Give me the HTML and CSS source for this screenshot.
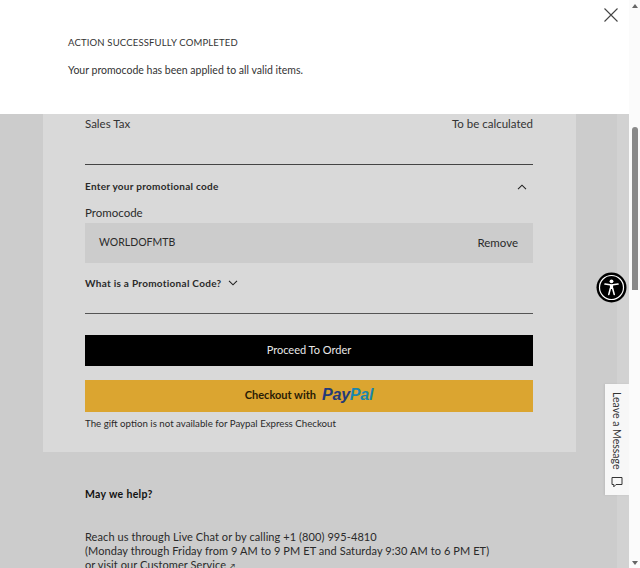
FILE: index.html
```html
<!DOCTYPE html>
<html lang="en">
<head>
<meta charset="utf-8">
<title>Cart</title>
<link rel="stylesheet" href="styles.css">
</head>
<body>
<div class="viewport">
  <main class="page">
    <section class="notice">
      <button class="close" aria-label="Close">
        <svg width="16" height="16" viewBox="0 0 16 16"><path d="M1.5 1.5L14.5 14.5M14.5 1.5L1.5 14.5" stroke="#444" stroke-width="1.1" fill="none"/></svg>
      </button>
      <h2 class="notice-title">ACTION SUCCESSFULLY COMPLETED</h2>
      <p class="notice-text">Your promocode has been applied to all valid items.</p>
    </section>
    <div class="backdrop">
      <div class="main-col">
        <section class="card">
          <div class="row tax"><span>Sales Tax</span><span>To be calculated</span></div>
          <div class="row promo-head">
            <span>Enter your promotional code</span>
            <svg class="chev-up" width="10" height="6" viewBox="0 0 10 6"><path d="M1 5.2L5 1.2L9 5.2" stroke="#222" stroke-width="1.1" fill="none"/></svg>
          </div>
          <div class="promo-label">Promocode</div>
          <div class="row promo-input"><span class="code">WORLDOFMTB</span><span>Remove</span></div>
          <div class="what">
            <span>What is a Promotional Code?</span>
            <svg width="10" height="6" viewBox="0 0 10 6"><path d="M1 .8L5 4.8L9 .8" stroke="#222" stroke-width="1.1" fill="none"/></svg>
          </div>
          <button class="order">Proceed To Order</button>
          <button class="paypal"><span>Checkout with</span><span class="pp-logo"><span class="pp-pay">Pay</span><span class="pp-pal">Pal</span></span></button>
          <p class="note">The gift option is not available for Paypal Express Checkout</p>
        </section>
        <section class="help">
          <h3 class="help-title">May we help?</h3>
          <p class="help-text">Reach us through Live Chat or by calling +1 (800) 995-4810<br>(Monday through Friday from 9 AM to 9 PM ET and Saturday 9:30 AM to 6 PM ET)<br>or visit our Customer Service <span class="ext">↗</span></p>
        </section>
      </div>
      <div class="edge"></div>
    </div>
    <button class="a11y" aria-label="Accessibility">
      <svg width="31" height="31" viewBox="0 0 31 31"><circle cx="15.5" cy="15.5" r="15" fill="#000"/><circle cx="15.5" cy="15.5" r="12" fill="none" stroke="#fff" stroke-width="1.2"/><circle cx="15.5" cy="9.3" r="1.9" fill="#fff"/><path d="M9 12L15.5 13L22 12" stroke="#fff" stroke-width="1.6" fill="none" stroke-linecap="round"/><path d="M15.5 12.8V17" stroke="#fff" stroke-width="3.2" fill="none"/><path d="M14.3 16.6L12.8 22.4M16.7 16.6L18.2 22.4" stroke="#fff" stroke-width="1.6" fill="none" stroke-linecap="round"/></svg>
    </button>
    <aside class="chat">
      <span class="chat-label">Leave a Message</span>
      <svg width="12" height="12" viewBox="0 0 12 12"><path d="M1 1.5H11V8.5H5L2.8 10.8V8.5H1Z" fill="none" stroke="#333" stroke-width="1"/></svg>
    </aside>
  </main>
  <div class="scrollbar">
    <span class="arrow-up"></span>
    <span class="thumb"></span>
    <span class="arrow-down"></span>
  </div>
</div>
</body>
</html>
```
FILE: styles.css
```css
* { box-sizing: border-box; }
html, body { margin: 0; height: 100%; overflow: hidden; }
body { font-family: "Lato", "Liberation Sans", sans-serif; color: #2a2a2a; background: #fff; }
button { font-family: inherit; border: 0; padding: 0; cursor: pointer; }
h2, h3, p { margin: 0; font-weight: inherit; }

.viewport { display: flex; width: 640px; height: 568px; }
.page { position: relative; width: 629px; height: 568px; overflow: hidden; display: flex; flex-direction: column; }

.notice { position: relative; flex: 0 0 114px; background: #fff; padding: 36px 68px 0; }
.notice-title { font-size: 9.5px; line-height: 14px; letter-spacing: .17px; color: #333; }
.notice-text { margin-top: 13px; font-size: 10.5px; line-height: 14px; color: #333; }
.close { position: absolute; left: 603px; top: 7px; width: 16px; height: 16px; background: none; }

.backdrop { flex: 1; display: flex; background: #ccc; padding-left: 43px; min-height: 0; }
.main-col { width: 533px; flex: none; }
.edge { flex: 1; margin-left: 41px; background: #d2d2d2; }

.card { background: #d9d9d9; height: 338px; padding: 0 43px 0 42px; display: flex; flex-direction: column; }
.row { display: flex; justify-content: space-between; align-items: center; }
.tax { height: 51px; padding-bottom: 32px; font-size: 11.5px; border-bottom: 1px solid #444; color: #333; }
.promo-head { height: 44px; padding-bottom: 2px; font-size: 10px; font-weight: 700; letter-spacing: .26px; padding-right: 6px; color: #2a2a2a; }
.chev-up { margin-top: 2px; }
.promo-label { font-size: 11.5px; line-height: 16px; margin-top: -4px; height: 18px; }
.promo-input { height: 40px; background: #ccc; padding: 0 15px 2px 14px; font-size: 11.5px; }
.code { font-size: 10.5px; }
.what { display: flex; align-items: center; gap: 7px; height: 51px; padding-bottom: 10px; font-size: 10px; font-weight: 700; letter-spacing: .28px; border-bottom: 1px solid #555; }
.order { margin-top: 21px; height: 31px; flex: none; padding-bottom: 2px; background: #000; color: #e8e8e8; font-size: 11px; }
.paypal { margin-top: 14px; height: 32px; flex: none; padding-bottom: 3px; background: #dba530; color: #2a1c05; font-size: 11px; font-weight: 700; display: flex; align-items: center; justify-content: center; gap: 6px; }
.pp-logo { font-family: "Liberation Sans", sans-serif; font-size: 16px; font-style: italic; font-weight: 700; letter-spacing: -.2px; }
.pp-pay { color: #233a78; }
.pp-pal { color: #1a86ad; }
.note { margin-top: 5px; font-size: 9.7px; line-height: 12px; color: #2a2a2a; }

.help { padding: 35px 43px 0 42px; }
.help-title { font-size: 10.5px; font-weight: 700; line-height: 14px; letter-spacing: .33px; color: #111; }
.help-text { margin-top: 29px; font-size: 11px; line-height: 14px; letter-spacing: .08px; white-space: nowrap; }
.ext { font-size: 8px; }

.a11y { position: absolute; left: 596px; top: 272px; width: 31px; height: 31px; background: none; }
.chat { position: absolute; left: 605px; top: 384px; width: 24px; height: 111px; background: #f7f7f7; box-shadow: -1px 0 2px rgba(0,0,0,.08); display: flex; flex-direction: column; align-items: center; padding-top: 8px; gap: 7px; }
.chat-label { writing-mode: vertical-rl; font-size: 10.5px; color: #333; white-space: nowrap; }

.scrollbar { flex: 1; background: #fbfbfb; display: flex; flex-direction: column; align-items: center; padding-top: 4px; position: relative; }
.arrow-up { width: 0; height: 0; border: 3px solid transparent; border-top: 0; border-bottom: 4px solid #666; }
.thumb { width: 6px; height: 163px; margin-top: 119px; background: #8a8a8a; border-radius: 3px 3px 0 0; }
.arrow-down { position: absolute; bottom: 3px; width: 0; height: 0; border: 3px solid transparent; border-bottom: 0; border-top: 4px solid #666; }
```
